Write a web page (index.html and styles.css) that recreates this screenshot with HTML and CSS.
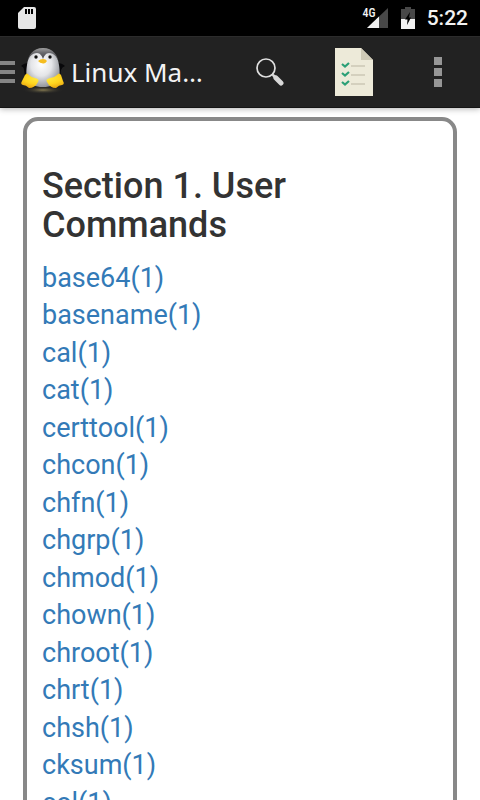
FILE: index.html
```html
<!DOCTYPE html>
<html lang="en">
<head>
<meta charset="utf-8">
<meta name="viewport" content="width=device-width, initial-scale=1">
<title>Linux Man Pages</title>
<link rel="stylesheet" href="styles.css">
</head>
<body>
<div class="status-bar">
  <svg class="sd-icon" width="18" height="22" viewBox="0 0 18 22" aria-hidden="true">
    <path fill="#e6e6e6" d="M6 0H16Q18 0 18 2V20Q18 22 16 22H2Q0 22 0 20V6Z"/>
    <path fill="#000" d="M7 2h2v5H7zM10 2h2v5h-2zM13 2h2v5h-2z"/>
  </svg>
  <div class="status-right">
    <div class="signal">
      <span class="network">4G</span>
      <svg width="22" height="20" viewBox="0 0 22 20" aria-hidden="true">
        <path fill="#484848" d="M22 0V20H1Z"/>
        <path fill="#f2f2f2" d="M13 8.600V20H1Z"/>
      </svg>
    </div>
    <svg class="battery" width="14" height="22" viewBox="0 0 14 22" aria-hidden="true">
      <path fill="#484848" d="M4 0h6v2h4v10H0V2h4z"/>
      <path fill="#f2f2f2" d="M0 12h14v10H0z"/>
      <path fill="#000" d="M9 5L8 10.500h2L6 18l.5-5.500H4z"/>
    </svg>
    <span class="clock">5:22</span>
  </div>
</div>
<header class="app-bar">
  <button class="home" type="button" aria-label="Open navigation">
    <svg width="15" height="22" viewBox="0 0 15 22" aria-hidden="true">
      <path fill="#858585" d="M0 0h15v4H0zM0 9h15v4H0zM0 18h15v4H0z"/>
    </svg>
    <svg class="penguin" width="48" height="48" viewBox="0 0 48 48" aria-hidden="true">
      <defs>
        <radialGradient id="belly" cx=".45" cy=".4" r=".62">
          <stop offset="0" stop-color="#fff"/><stop offset=".5" stop-color="#e4e5e8"/><stop offset="1" stop-color="#8f9298"/>
        </radialGradient>
        <linearGradient id="head" x1="0" y1="0" x2="0" y2="1">
          <stop offset="0" stop-color="#a0a0a0"/><stop offset=".3" stop-color="#68686c"/><stop offset="1" stop-color="#303034"/>
        </linearGradient>
        <radialGradient id="foot" cx=".5" cy=".35" r=".7">
          <stop offset="0" stop-color="#fff04a"/><stop offset=".6" stop-color="#ffd51e"/><stop offset="1" stop-color="#e9a512"/>
        </radialGradient>
        <radialGradient id="ground">
          <stop offset="0" stop-color="#867b52"/><stop offset="1" stop-color="#222" stop-opacity="0"/>
        </radialGradient>
      </defs>
      <ellipse cx="23" cy="42" rx="21" ry="4" fill="url(#ground)"/>
      <path fill="#08080a" d="M9 15Q4 15 1 18Q4 19 4 22Q4 27 7 31L12 18ZM37 15Q42 15 45 18Q42 19 41 22Q41 27 38 31L33 18Z"/>
      <path fill="url(#belly)" d="M23 1C13 1 8 8 7 17C5 29 7 39 23 39C39 39 41 29 39 17C38 8 33 1 23 1Z"/>
      <path fill="url(#head)" d="M23 0C13 0 8 7 7 16C8 9 12 5 17 5C20 5 22 8 23 11C24 8 26 5 29 5C34 5 38 9 39 16C38 7 33 0 23 0Z"/>
      <circle cx="16" cy="9" r="1.700" fill="#111"/><circle cx="30" cy="9" r="1.700" fill="#111"/>
      <path fill="#f5bd20" d="M23 11Q26 11 27 13Q25 16 23 15.500Q20 15 18 13Q20 11 23 11Z"/>
      <path fill="url(#foot)" d="M5 27Q7 24 9 27Q12 30 15 30Q20 31 18 34Q15 40 9 40Q6 37 3 37Q0 36 2 33ZM41 27Q39 24 37 27Q34 30 30 30Q25 31 27 34Q30 40 36 40Q39 37 42 37Q45 36 43 33Z"/>
    </svg>
  </button>
  <h1 class="title">Linux Ma…</h1>
  <button class="action" type="button" aria-label="Search">
    <svg width="28" height="28" viewBox="0 0 28 28" aria-hidden="true">
      <circle cx="10" cy="10" r="9" fill="none" stroke="#e0e0e0" stroke-width="1.7"/>
      <path d="M16 16l3 3" stroke="#ddd" stroke-width="2"/>
      <path d="M20 20l5 5" stroke="#d8d8d8" stroke-width="5" stroke-linecap="round"/>
      <path d="M18 18l3 3" stroke="#d8d8d8" stroke-width="3" stroke-linecap="round"/>
    </svg>
  </button>
  <button class="action" type="button" aria-label="Contents">
    <svg width="38" height="48" viewBox="0 0 38 48" aria-hidden="true">
      <path fill="#edead9" d="M0 0H26L38 12V48H0Z"/>
      <path fill="#cfcab6" d="M26 0L38 12H26Z"/>
      <path fill="none" stroke="#cbc7b5" stroke-width="1.6" d="M16 18h14M16 27h14M16 36h14"/>
      <path fill="none" stroke="#2b9f76" stroke-width="2.2" d="M7 16l3 2.500l4-3.500M7 25l3 2.500l4-3.500M7 34l3 2.500l4-3.500"/>
    </svg>
  </button>
  <button class="action" type="button" aria-label="More options">
    <svg width="8" height="30" viewBox="0 0 8 30" aria-hidden="true">
      <path fill="#969696" d="M0 0h8v8H0zM0 11h8v8H0zM0 22h8v8H0z"/>
    </svg>
  </button>
</header>
<main class="content">
  <section class="panel">
    <h2>Section 1. User Commands</h2>
    <ul class="commands">
      <li><a href="#base64">base64(1)</a></li>
      <li><a href="#basename">basename(1)</a></li>
      <li><a href="#cal">cal(1)</a></li>
      <li><a href="#cat">cat(1)</a></li>
      <li><a href="#certtool">certtool(1)</a></li>
      <li><a href="#chcon">chcon(1)</a></li>
      <li><a href="#chfn">chfn(1)</a></li>
      <li><a href="#chgrp">chgrp(1)</a></li>
      <li><a href="#chmod">chmod(1)</a></li>
      <li><a href="#chown">chown(1)</a></li>
      <li><a href="#chroot">chroot(1)</a></li>
      <li><a href="#chrt">chrt(1)</a></li>
      <li><a href="#chsh">chsh(1)</a></li>
      <li><a href="#cksum">cksum(1)</a></li>
      <li><a href="#col">col(1)</a></li>
    </ul>
  </section>
</main>
</body>
</html>
```
FILE: styles.css
```css
* { box-sizing: border-box; }

body {
  margin: 0;
  height: 100vh;
  display: flex;
  flex-direction: column;
  background: #fff;
  font-family: Roboto, sans-serif;
}

svg { display: block; flex: none; }

.status-bar {
  display: flex;
  flex: none;
  align-items: center;
  justify-content: space-between;
  height: 36px;
  padding: 0 12px 0 18px;
  background: #000;
  color: #f2f2f2;
}

.status-right { display: flex; align-items: center; }

.signal { display: flex; align-items: flex-start; }

.network {
  font-family: "Roboto Condensed", Roboto, sans-serif;
  font-size: 12px;
  line-height: 10px;
  font-weight: 500;
  margin-right: -10px;
}

.battery { margin: 0 12px 0 13px; }

.clock { font-size: 21px; line-height: 38px; font-weight: 500; }

.app-bar {
  position: relative;
  display: flex;
  flex: none;
  align-items: center;
  height: 72px;
  background: #222;
  border-top: 1px solid #2c2c2c;
  border-bottom: 1px solid #151515;
  box-shadow: 0 1px 6px rgba(0, 0, 0, 0.3);
}

button { border: 0; padding: 0; background: none; cursor: pointer; }

.home { display: flex; align-items: center; gap: 5px; }

.title {
  flex: 1;
  min-width: 0;
  margin: 0 0 0 3px;
  overflow: hidden;
  white-space: nowrap;
  font-family: "Noto Sans", sans-serif;
  font-size: 26px;
  line-height: 36px;
  font-weight: 400;
  color: #f3f3f3;
}

.action {
  display: flex;
  flex: 0 0 84px;
  align-items: center;
  justify-content: center;
  height: 70px;
}

.content {
  flex: 1;
  min-height: 0;
  padding: 9px 23px;
  overflow-y: auto;
  scrollbar-width: none;
}

.panel {
  padding: 46px 15px 15px;
  border: 4px solid #888;
  border-radius: 15px;
}

h2 {
  margin: 0 0 15px;
  font-size: 36px;
  line-height: 39px;
  font-weight: 500;
  color: #333;
}

.commands {
  display: grid;
  grid-auto-rows: 37px 38px;
  margin: 0;
  padding: 0;
  list-style: none;
  font-size: 27px;
  line-height: 37px;
}

.commands a { color: #337ab7; text-decoration: none; }
```
